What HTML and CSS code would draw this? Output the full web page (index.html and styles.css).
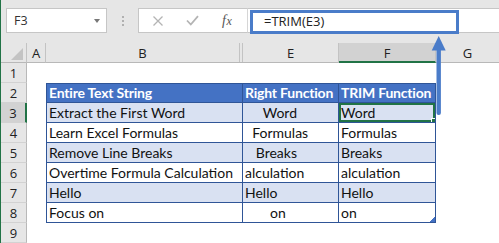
FILE: index.html
```html
<!DOCTYPE html>
<html>
<head>
<meta charset="utf-8">
<link rel="stylesheet" href="styles.css">
</head>
<body>
<div class="app">
  <div class="toolbar">
    <div class="namebox"><span class="nb-text">F3</span><span class="caret"></span></div>
    <div class="dots"><i></i><i></i><i></i></div>
    <div class="fxbox">
      <svg class="ic" width="12" height="12" viewBox="0 0 12 12"><path d="M1.5 1.5 L10.5 10.5 M10.5 1.5 L1.5 10.5" stroke="#b4b4b4" stroke-width="1.3" fill="none"/></svg>
      <svg class="ic" width="13" height="11" viewBox="0 0 13 11"><path d="M1 5.5 L4.8 9.5 L12 1.2" stroke="#b4b4b4" stroke-width="1.8" fill="none"/></svg>
      <span class="fx"><i>f</i><i class="x">x</i></span>
    </div>
    <div class="formula"><span class="ftext">=TRIM(E3)</span></div>
    <div class="hl"></div>
  </div>
  <div class="sheet">
    <div class="corner"><svg width="26" height="20" viewBox="0 0 26 20"><polygon points="22,5 22,17 10,17" fill="#c3c3c3"/></svg></div>
    <div class="ch">A</div>
    <div class="ch chb">B</div>
    <div class="ch">E</div>
    <div class="ch chsel">F</div>
    <div class="ch chg">G</div>

    <div class="rh">1</div><div class="c"></div><div class="c"></div><div class="c"></div><div class="c"></div><div class="c"></div>

    <div class="rh">2</div><div class="c"></div>
    <div class="t th first">Entire Text String</div>
    <div class="t th">Right Function</div>
    <div class="t th">TRIM Function</div>
    <div class="c"></div>

    <div class="rh rhsel">3</div><div class="c"></div>
    <div class="t band first">Extract the First Word</div>
    <div class="t band">     Word</div>
    <div class="t band sel">Word</div>
    <div class="c"></div>

    <div class="rh">4</div><div class="c"></div>
    <div class="t first">Learn Excel Formulas</div>
    <div class="t">  Formulas</div>
    <div class="t">Formulas</div>
    <div class="c"></div>

    <div class="rh">5</div><div class="c"></div>
    <div class="t band first">Remove Line Breaks</div>
    <div class="t band">   Breaks</div>
    <div class="t band">Breaks</div>
    <div class="c"></div>

    <div class="rh">6</div><div class="c"></div>
    <div class="t first">Overtime Formula Calculation</div>
    <div class="t">alculation</div>
    <div class="t">alculation</div>
    <div class="c"></div>

    <div class="rh">7</div><div class="c"></div>
    <div class="t band first">Hello</div>
    <div class="t band">Hello</div>
    <div class="t band">Hello</div>
    <div class="c"></div>

    <div class="rh">8</div><div class="c"></div>
    <div class="t first">Focus on</div>
    <div class="t">       on</div>
    <div class="t last">on</div>
    <div class="c"></div>

    <div class="rh">9</div><div class="c"></div><div class="c"></div><div class="c"></div><div class="c"></div><div class="c"></div>
  </div>
  <svg class="arrow" width="499" height="243" viewBox="0 0 499 243">
    <rect x="436.5" y="45" width="4.4" height="70" rx="2" fill="#4a7cc9"/>
    <polygon points="431.7,50.5 445.7,50.5 438.7,36" fill="#4a7cc9"/>
  </svg>
</div>
</body>
</html>
```

FILE: styles.css
```css
* { box-sizing: border-box; }
html, body { margin: 0; padding: 0; background: #fff; }
.app {
  position: relative;
  width: 499px;
  height: 243px;
  overflow: hidden;
  border-left: 1px solid #217346;
  font-family: "Lato", "Open Sans", sans-serif;
}
.toolbar {
  position: relative;
  height: 43px;
  background: #e6e6e6;
  padding-top: 8px;
  display: flex;
  align-items: flex-start;
}
.namebox {
  margin-left: 5px;
  width: 101px;
  height: 25px;
  background: #fff;
  border: 1px solid #c6c6c6;
  display: flex;
  align-items: center;
  justify-content: space-between;
  padding: 0 6px 0 7px;
  font-family: "Open Sans", sans-serif;
  font-size: 12.5px;
  color: #333;
}
.caret {
  width: 0; height: 0;
  border-left: 3.5px solid transparent;
  border-right: 3.5px solid transparent;
  border-top: 4px solid #777;
  margin-top: 1px;
}
.dots {
  width: 31px;
  height: 25px;
  display: flex;
  flex-direction: column;
  align-items: center;
  justify-content: center;
  gap: 2px;
}
.dots i { display: block; width: 2px; height: 2px; background: #b0b0b0; }
.fxbox {
  width: 110px;
  height: 25px;
  background: #fff;
  border: 1px solid #c6c6c6;
  border-right: 1px solid #d6d6d6;
  display: flex;
  align-items: center;
  padding-left: 13px;
}
.ic { display: block; }
.ic + .ic { margin-left: 22px; }
.fx {
  margin-left: 23px;
  font-family: "Liberation Serif", serif;
  font-size: 14px;
  color: #555;
  letter-spacing: 0.5px;
}
.fx .x { font-size: 12px; }
.formula {
  flex: 1;
  height: 25px;
  background: #fff;
  border-top: 1px solid #c6c6c6;
  border-bottom: 1px solid #c6c6c6;
  display: flex;
  align-items: center;
  padding-left: 16px;
  font-family: "Open Sans", sans-serif;
  font-size: 13px;
  color: #222;
}
.hl {
  position: absolute;
  left: 249px;
  top: 10px;
  width: 209px;
  height: 24px;
  border: 3px solid #4a7cc9;
}
.sheet {
  display: grid;
  grid-template-columns: 26px 19px 197px 96px 97px 1fr;
  grid-template-rows: repeat(10, 20px);
  font-size: 14px;
  line-height: 19px;
}
.corner, .ch {
  background: #e6e6e6;
  border-right: 1px solid #c3c3c3;
  border-bottom: 1px solid #b8b8b8;
}
.corner svg { display: block; }
.ch {
  text-align: center;
  color: #222;
  font-family: "Open Sans", sans-serif;
  font-size: 13px;
  line-height: 21px;
}
.chb {
  border-right: none;
  background: linear-gradient(to left, #c3c3c3 0, #c3c3c3 1px, #e6e6e6 1px, #e6e6e6 3px, #c3c3c3 3px, #c3c3c3 4px, #e6e6e6 4px);
  padding-right: 4px;
}
.chsel { background: #d2d2d2; border-bottom: 2px solid #217346; color: #222; }
.chg { border-right: none; }
.rh {
  background: #e6e6e6;
  border-right: 1px solid #b8b8b8;
  border-bottom: 1px solid #d2d2d2;
  text-align: center;
  color: #222;
  font-family: "Open Sans", sans-serif;
  font-size: 13px;
  line-height: 20px;
}
.rhsel { background: #d2d2d2; border-right: 2px solid #217346; }
.c { background: #fff; }
.t {
  white-space: pre;
  color: #111;
  padding-left: 2px;
  border-right: 1px solid #2f5597;
  border-bottom: 1px solid #2f5597;
  overflow: hidden;
  line-height: 20px;
}
.first { border-left: 1px solid #2f5597; }
.th {
  background: #4472c4;
  color: #fff;
  font-weight: bold;
  border-top: 1px solid #2f5597;
  line-height: 18px;
  letter-spacing: -0.2px;
}
.band { background: #d9e1f2; }
.sel {
  position: relative;
  box-shadow: inset 0 0 0 2px #217346;
  background: #d9e1f2;
}
.sel::after {
  content: "";
  position: absolute;
  right: -4px;
  bottom: -4px;
  width: 6px;
  height: 6px;
  background: #217346;
  border: 1px solid #fff;
}
.last {
  background: linear-gradient(135deg, transparent 50%, #4472c4 50%) no-repeat right bottom / 5px 5px, #fff;
}
.arrow {
  position: absolute;
  left: -1px;
  top: 0;
  pointer-events: none;
}
```
